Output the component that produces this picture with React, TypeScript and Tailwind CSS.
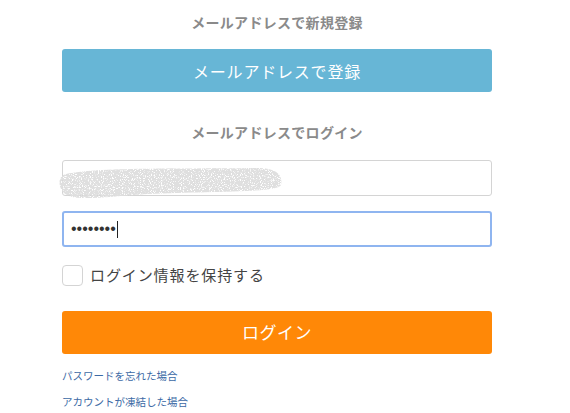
import React from "react";

const FONT = { fontFamily: '"Noto Sans CJK JP", "Noto Sans", sans-serif' };

export default function App() {
  return (
    <div className="min-h-[413px] w-[570px] bg-white" style={FONT}>
      <div className="ml-[62px] w-[430px] pt-[12px]">
        <h2 className="h-[20px] text-center text-[14px] font-bold leading-[20px] tracking-[0.3px] text-[#8a8a8a]">
          メールアドレスで新規登録
        </h2>
        <button className="mt-[17px] flex h-[43px] w-full items-center justify-center rounded-[3px] bg-[#67b6d6] text-[16px] tracking-[0.8px] text-white">
          メールアドレスで登録
        </button>

        <h2 className="mt-[30px] h-[20px] text-center text-[14px] font-bold leading-[20px] tracking-[0.3px] text-[#8a8a8a]">
          メールアドレスでログイン
        </h2>

        <div className="relative mt-[18px]">
          <input
            className="h-[36px] w-full rounded-[3px] border border-[#d4d4d4] bg-white px-[10px] text-[14px] outline-none"
            defaultValue=""
          />
          <svg
            className="pointer-events-none absolute left-[-5px] top-[3px]"
            width="228"
            height="38"
            viewBox="0 0 228 38"
          >
            <defs>
              <filter id="grain" x="0" y="0" width="100%" height="100%">
                <feTurbulence type="fractalNoise" baseFrequency="0.9" numOctaves="2" result="n" />
                <feColorMatrix
                  in="n"
                  type="matrix"
                  values="0 0 0 0 0.74  0 0 0 0 0.74  0 0 0 0 0.74  0 0 0 7 -2.2"
                  result="g"
                />
                <feComposite in="g" in2="SourceGraphic" operator="in" />
              </filter>
            </defs>
            <path
              d="M6 12 C30 4 120 6 200 5 C220 5 226 12 224 22 C222 30 150 28 90 31 C50 34 20 38 10 32 C2 28 0 16 6 12 Z"
              fill="#000"
              filter="url(#grain)"
            />
          </svg>
        </div>

        <div className="mt-[15px] flex h-[36px] w-full items-center rounded-[3px] border-2 border-[#8fb5f0] bg-white px-[7px]">
          <span
            className="text-[16px] leading-none tracking-[0px] text-[#333]"
            style={{ fontFamily: '"Liberation Sans", sans-serif' }}
          >
            ••••••••
          </span>
          <span className="ml-[1px] h-[17px] w-[1px] bg-[#222]" />
        </div>

        <label className="mt-[17px] flex items-center">
          <span className="h-[21px] w-[21px] rounded-[4px] border border-[#d4d4d4] bg-white" />
          <span className="ml-[7px] text-[15px] tracking-[0.9px] text-[#444]">ログイン情報を保持する</span>
        </label>

        <button className="mt-[24px] flex h-[43px] w-full items-center justify-center rounded-[3px] bg-[#ff8807] text-[17px] tracking-[0.5px] text-white">
          ログイン
        </button>

        <div className="mt-[13px] flex flex-col">
          <a className="h-[18px] text-[10.5px] leading-[18px] text-[#3c6aa5]">パスワードを忘れた場合</a>
          <a className="mt-[8px] h-[18px] text-[10.5px] leading-[18px] text-[#3c6aa5]">アカウントが凍結した場合</a>
        </div>
      </div>
    </div>
  );
}
